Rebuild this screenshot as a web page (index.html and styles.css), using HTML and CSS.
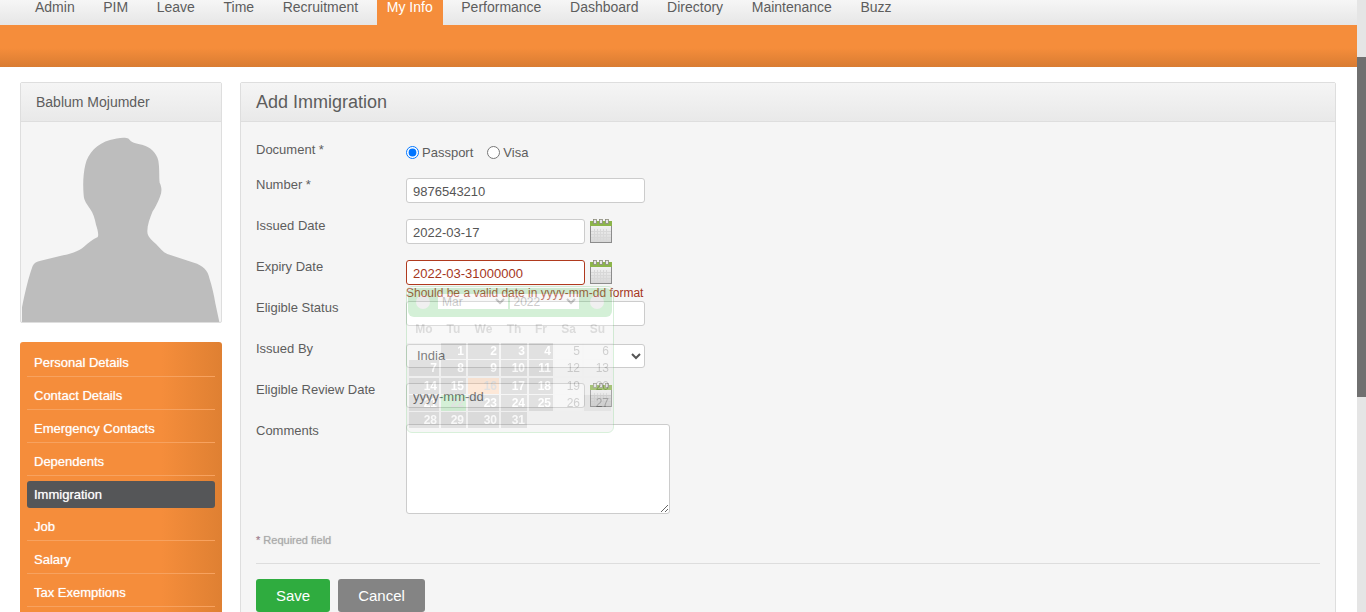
FILE: index.html
```html
<!DOCTYPE html>
<html lang="en">
<head>
  <meta charset="UTF-8">
  <title>Add Immigration</title>
  <meta name="viewport" content="width=device-width, initial-scale=1">
  <link rel="stylesheet" href="styles.css">
</head>
<body>
  <svg class="sprite" width="0" height="0" aria-hidden="true">
    <defs>
      <linearGradient id="calBody" x1="0" y1="0" x2="0" y2="1">
        <stop offset="0" stop-color="#f6f6f6"/>
        <stop offset="1" stop-color="#d6d6d6"/>
      </linearGradient>
      <symbol id="cal" viewBox="0 0 22 24">
        <rect x="0.5" y="4.5" width="21" height="19" fill="url(#calBody)" stroke="#8c8c8c"/>
        <path d="M4.5 10V23M7.5 10V23M10.5 10V23M13.5 10V23M16.5 10V23M1 12.5H21M1 15.5H21M1 18.5H21" stroke="#d8d8d8" stroke-width="1" fill="none"/>
        <rect x="0" y="2" width="22" height="5" fill="#8cb54a"/>
        <rect x="3.5" y="0.5" width="3" height="4" fill="#e6e6e6" stroke="#8a8a7a" stroke-width="0.8"/>
        <rect x="9.5" y="0.5" width="3" height="4" fill="#e6e6e6" stroke="#8a8a7a" stroke-width="0.8"/>
        <rect x="15.5" y="0.5" width="3" height="4" fill="#e6e6e6" stroke="#8a8a7a" stroke-width="0.8"/>
      </symbol>
    </defs>
  </svg>

  <div class="page">
    <nav class="topnav">
      <a href="#">Admin</a>
      <a href="#">PIM</a>
      <a href="#">Leave</a>
      <a href="#">Time</a>
      <a href="#">Recruitment</a>
      <a href="#" class="current">My Info</a>
      <a href="#">Performance</a>
      <a href="#">Dashboard</a>
      <a href="#">Directory</a>
      <a href="#">Maintenance</a>
      <a href="#">Buzz</a>
    </nav>
    <div class="subnav"></div>

    <div class="content">
      <aside class="sidebar">
        <div class="card">
          <div class="card-head">Bablum Mojumder</div>
          <div class="photo">
            <svg viewBox="33 -24 600 600" width="200" height="200" aria-hidden="true">
              <path fill="#bdbdbd" d="M36 576V532C44 490 56 440 68 408C72 398 80 395 92 392L150 378C180 372 205 364 222 350C236 338 248 328 262 322C268 316 262 296 258 284C254 264 250 250 240 236C230 222 222 212 221 196C218 160 220 130 226 104C234 70 262 40 300 30C320 24 345 20 356 26C364 38 376 40 396 44C420 50 440 68 445 92C449 115 447 140 449 158C456 172 456 186 450 200C444 216 436 232 428 244C420 264 412 284 412 304C412 320 424 330 438 342C450 354 458 366 472 372L552 398C578 406 594 420 598 444C606 468 612 496 616 520L628 576Z"/>
            </svg>
          </div>
        </div>
        <ul class="side-menu">
          <li><a href="#">Personal Details</a></li>
          <li><a href="#">Contact Details</a></li>
          <li><a href="#">Emergency Contacts</a></li>
          <li><a href="#">Dependents</a></li>
          <li class="active"><a href="#">Immigration</a></li>
          <li><a href="#">Job</a></li>
          <li><a href="#">Salary</a></li>
          <li><a href="#">Tax Exemptions</a></li>
        </ul>
      </aside>

      <section class="panel">
        <h1 class="panel-head">Add Immigration</h1>
        <form class="panel-body">
          <div class="row row-radio">
            <label class="row-label">Document *</label>
            <div class="radios">
              <label class="radio"><input type="radio" name="doc" checked>Passport</label>
              <label class="radio"><input type="radio" name="doc">Visa</label>
            </div>
          </div>
          <div class="row">
            <label class="row-label">Number *</label>
            <input class="field" type="text" value="9876543210">
          </div>
          <div class="row">
            <label class="row-label">Issued Date</label>
            <input class="field field-date" type="text" value="2022-03-17">
            <svg class="cal-icon"><use href="#cal"/></svg>
          </div>
          <div class="row row-error">
            <label class="row-label">Expiry Date</label>
            <input class="field field-date invalid" type="text" value="2022-03-31000000">
            <svg class="cal-icon"><use href="#cal"/></svg>
            <span class="error-msg">Should be a valid date in yyyy-mm-dd format</span>
          </div>
          <div class="row">
            <label class="row-label">Eligible Status</label>
            <input class="field" type="text">
          </div>
          <div class="row">
            <label class="row-label">Issued By</label>
            <select class="field field-select"><option>India</option></select>
          </div>
          <div class="row">
            <label class="row-label">Eligible Review Date</label>
            <input class="field field-date" type="text" value="yyyy-mm-dd">
            <svg class="cal-icon"><use href="#cal"/></svg>
          </div>
          <div class="row row-comments">
            <label class="row-label">Comments</label>
            <textarea class="comments"></textarea>
          </div>
          <p class="required"><span>*</span> Required field</p>
          <div class="actions">
            <button type="button" class="btn btn-save">Save</button>
            <button type="button" class="btn btn-cancel">Cancel</button>
          </div>

          <!-- datepicker caught while it fades out -->
          <div class="datepicker">
            <div class="dp-head">
              <span class="dp-arrow"></span>
              <select class="dp-select"><option>Mar</option></select>
              <select class="dp-select"><option>2022</option></select>
              <span class="dp-arrow"></span>
            </div>
            <div class="dp-grid">
              <b>Mo</b><b>Tu</b><b>We</b><b>Th</b><b>Fr</b><b>Sa</b><b>Su</b>
              <i></i><a>1</a><a>2</a><a>3</a><a>4</a><a class="we">5</a><a class="we">6</a>
              <a>7</a><a>8</a><a>9</a><a>10</a><a>11</a><a class="we">12</a><a class="we">13</a>
              <a>14</a><a>15</a><a class="today">16</a><a>17</a><a>18</a><a class="we">19</a><a class="we">20</a>
              <a>21</a><a class="picked">22</a><a>23</a><a>24</a><a>25</a><a class="we">26</a><a class="hover">27</a>
              <a>28</a><a>29</a><a>30</a><a>31</a><i></i><i></i><i></i>
            </div>
          </div>
        </form>
      </section>
    </div>
  </div>

  <div class="scrollbar"><div class="thumb"></div></div>
</body>
</html>
```

FILE: styles.css
```css
* {
  box-sizing: border-box;
}
html, body {
  height: 100%;
  margin: 0;
  overflow: hidden;
}
body {
  display: flex;
  font-family: "Liberation Sans", Arial, sans-serif;
  font-size: 13px;
  color: #5d5d5d;
  background: #fff;
}
.sprite {
  position: absolute;
}
.page {
  flex: 1;
  min-width: 0;
}

/* Top navigation */
.topnav {
  display: flex;
  gap: 8.6px;
  height: 25px;
  padding-left: 25px;
  background: linear-gradient(#f6f6f6, #e6e6e6);
}
.topnav a {
  padding: 0 10px;
  font-size: 14px;
  line-height: 15px;
  color: #5d5d5d;
  text-decoration: none;
}
.topnav a.current {
  background: #f58d3b;
  color: #fff;
}
.subnav {
  height: 42px;
  background: linear-gradient(#f58d3b 0, #f58d3b 55%, #d97c32 100%);
}

/* Columns */
.content {
  display: flex;
  gap: 18px;
  padding: 15px 21px 0 20px;
}
.sidebar {
  flex: 0 0 202px;
}
.card {
  border: 1px solid #dedede;
  border-radius: 2px;
  background: #f5f5f5;
}
.card-head {
  height: 39px;
  padding-left: 15px;
  font-size: 14px;
  line-height: 39px;
  color: #5d5d5d;
  background: linear-gradient(#f5f5f5, #e9e9e9);
  border-bottom: 1px solid #dedede;
}
.photo {
  display: flex;
  height: 200px;
}

/* Side menu */
.side-menu {
  margin: 19px 0 0;
  padding: 2px 7px 20px;
  list-style: none;
  border-radius: 3px 3px 0 0;
  background: linear-gradient(90deg, #f58d3b 0, #f58d3b 70%, #df8032 100%);
}
.side-menu li {
  height: 33px;
  border-bottom: 1px solid #f7a25f;
}
.side-menu li.active {
  height: 27px;
  margin: 5px 0 0;
  border: 0;
  border-radius: 3px;
  background: #555658;
}
.side-menu a {
  display: block;
  height: 32px;
  padding: 4px 0 0 7px;
  font-size: 13px;
  line-height: 30px;
  color: #fff;
  text-decoration: none;
  text-shadow: 0 0 1px rgba(255, 255, 255, 0.7);
}
.side-menu .active a {
  height: 27px;
  padding-top: 0;
  line-height: 27px;
}

/* Form panel */
.panel {
  flex: 1;
  min-width: 0;
  border: 1px solid #dedede;
  border-radius: 2px;
  background: #f5f5f5;
}
.panel-head {
  height: 39px;
  margin: 0;
  padding-left: 15px;
  font-size: 18px;
  font-weight: normal;
  line-height: 39px;
  color: #5d5d5d;
  background: linear-gradient(#f5f5f5, #e9e9e9);
  border-bottom: 1px solid #dedede;
}
.panel-body {
  position: relative;
  padding: 21px 15px 0;
}
.row {
  position: relative;
  display: flex;
  align-items: flex-start;
  min-height: 25px;
  margin-bottom: 16px;
}
.row-radio {
  min-height: 19px;
}
.row-label {
  flex: 0 0 150px;
  line-height: 13px;
}
.radios {
  display: flex;
  gap: 14px;
  padding-top: 2px;
}
.radio {
  display: flex;
  align-items: center;
  gap: 3px;
  line-height: 15px;
}
.radio input {
  margin: 0;
}
.field {
  width: 239px;
  height: 25px;
  padding: 2px 6px 0;
  font: inherit;
  color: #555;
  background: #fff;
  border: 1px solid #ccc;
  border-radius: 3px;
  outline: 0;
}
.field-date {
  width: 179px;
}
.field.invalid {
  color: #a5361c;
  border-color: #b03a1e;
}
.field-select {
  height: 24px;
  margin: 2px 0 -1px;
  padding: 0 6px 2px;
}
.cal-icon {
  width: 22px;
  height: 24px;
  margin-left: 5px;
}
.error-msg {
  position: absolute;
  top: 26px;
  left: 150px;
  font-size: 12px;
  line-height: 14px;
  white-space: nowrap;
  color: #a5361c;
}
.comments {
  display: block;
  width: 264px;
  height: 90px;
  font: inherit;
  background: #fff;
  border: 1px solid #ccc;
  border-radius: 3px;
}
.row-comments {
  margin-bottom: 20px;
}
.required {
  margin: 0;
  padding-bottom: 16px;
  font-size: 11px;
  line-height: 13px;
  color: #aaa;
  text-shadow: 0 0 1px rgba(170, 170, 170, 0.7);
  border-bottom: 1px solid #ddd;
}
.required span {
  color: #a1788a;
}
.actions {
  display: flex;
  gap: 8px;
  padding-top: 15px;
}
.btn {
  height: 33px;
  padding: 0 20px;
  font: 15px "Liberation Sans", Arial, sans-serif;
  color: #fff;
  border: 0;
  border-radius: 3px;
}
.btn-save {
  width: 74px;
  background: #2fac3f;
}
.btn-cancel {
  width: 87px;
  background: #848484;
}

/* Datepicker, mid fade */
.datepicker {
  position: absolute;
  top: 164px;
  left: 165px;
  width: 208px;
  height: 147px;
  padding: 1px 1px;
  border: 1px solid #7ccb84;
  border-radius: 6px;
  background: linear-gradient(#fff 56px, #e2e2e2 56px);
  opacity: 0.3;
}
.dp-head {
  display: flex;
  align-items: center;
  gap: 2px;
  height: 29px;
  padding: 0 8px 2px;
  border-radius: 6px;
  background: #6fcb79;
}
.dp-arrow {
  flex: 0 0 14px;
  height: 14px;
  margin: 0 6px 0 0;
  border-radius: 50%;
  background: #ccc;
}
.dp-arrow:last-child {
  margin: 0 0 0 9px;
}
.dp-select {
  width: 71px;
  height: 15px;
  padding: 0;
  font: 12px "Liberation Sans", Arial, sans-serif;
  color: #555;
  background: #fff;
  border: 0;
}
.dp-grid {
  display: grid;
  grid-template-columns: 30px 25px 31px 26px 24px 27px 27px;
  grid-template-rows: 24.75px;
  grid-auto-rows: 16px;
  gap: 1.25px 2px;
  padding-left: 1px;
  font-size: 12px;
}
.dp-grid b {
  padding-top: 5px;
  text-align: center;
  font-size: 12px;
  line-height: 14px;
  color: #a1a1a1;
}
.dp-grid a {
  padding-right: 2px;
  text-align: right;
  font-weight: bold;
  line-height: 16px;
  color: #fff;
  background: #999;
}
.dp-grid a.we {
  font-weight: normal;
  color: #5f5f5f;
  background: #e4e4e4;
}
.dp-grid a.today {
  color: #999;
  background: #f9b27c;
}
.dp-grid a.picked {
  color: #999;
  background: #6fcb79;
}
.dp-grid a.hover {
  font-weight: normal;
  color: #222;
  background: #bbb;
}

/* Browser scrollbar as captured */
.scrollbar {
  flex: 0 0 9px;
  padding-top: 57px;
  background: #e5e5e5;
}
.thumb {
  height: 340px;
  background: #707070;
}
```
